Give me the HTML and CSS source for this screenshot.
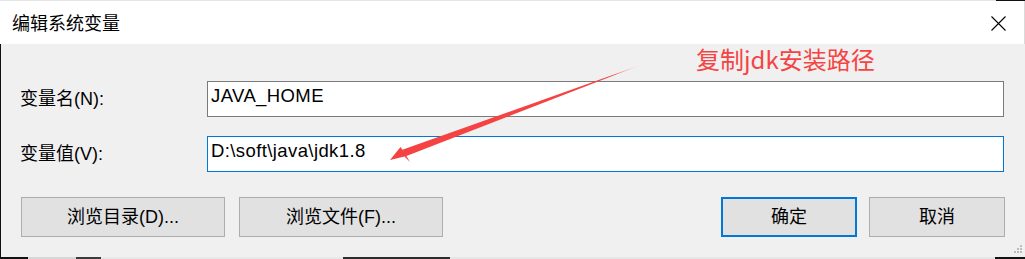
FILE: index.html
```html
<!DOCTYPE html>
<html lang="zh">
<head>
<meta charset="utf-8">
<title>编辑系统变量</title>
<link rel="stylesheet" href="styles.css">
</head>
<body>
<div class="screen">
  <div class="topline"><span class="topline-fill"></span><span class="topline-dark"></span></div>
  <div class="titlebar">
    <span class="title">编辑系统变量</span>
    <svg class="close" width="15" height="15" viewBox="0 0 15 15" aria-hidden="true">
      <path d="M0.5 0.5 L14.5 14.5 M14.5 0.5 L0.5 14.5" stroke="#000" stroke-width="1.1" fill="none"/>
    </svg>
  </div>
  <div class="content">
    <div class="row">
      <label class="label">变量名(N):</label>
      <div class="field">JAVA_HOME</div>
    </div>
    <div class="row row-second">
      <label class="label">变量值(V):</label>
      <div class="field field-focus">D:\soft\java\jdk1.8</div>
    </div>
    <div class="buttons">
      <div class="btn-group">
        <button class="btn btn-wide">浏览目录(D)...</button>
        <button class="btn btn-wide">浏览文件(F)...</button>
      </div>
      <div class="btn-group btn-group-right">
        <button class="btn btn-narrow btn-default">确定</button>
        <button class="btn btn-narrow">取消</button>
      </div>
    </div>
    <svg class="grip" width="10" height="10" viewBox="0 0 10 10" aria-hidden="true">
      <rect x="7" y="0" width="2" height="2" fill="#bdbdbd"/>
      <rect x="4" y="3" width="2" height="2" fill="#bdbdbd"/>
      <rect x="7" y="3" width="2" height="2" fill="#bdbdbd"/>
      <rect x="1" y="6" width="2" height="2" fill="#bdbdbd"/>
      <rect x="4" y="6" width="2" height="2" fill="#bdbdbd"/>
      <rect x="7" y="6" width="2" height="2" fill="#bdbdbd"/>
    </svg>
  </div>
  <div class="bottomline"><span class="bl-dark"></span><span class="bl-gray"></span><span class="bl-mid"></span><span class="bl-text"></span><span class="bl-gray2"></span><span class="bl-text2"></span><span class="bl-rest"></span></div>

  <div class="annotation">复制jdk安装路径</div>
  <svg class="arrow" width="1025" height="259" viewBox="0 0 1025 259" aria-hidden="true">
    <defs>
      <linearGradient id="fade" x1="640" y1="65" x2="400" y2="155" gradientUnits="userSpaceOnUse">
        <stop offset="0" stop-color="#f54242" stop-opacity="0.2"/>
        <stop offset="0.12" stop-color="#f54242" stop-opacity="1"/>
        <stop offset="1" stop-color="#f54242" stop-opacity="1"/>
      </linearGradient>
    </defs>
    <polygon points="640,65.2 405.8,156.2 402.3,149.8" fill="url(#fade)"/>
    <polygon points="390,160 400.5,147 404,152 410,162 404.5,156.5" fill="#f54242"/>
  </svg>
</div>
</body>
</html>
```

FILE: styles.css
```css
html, body {
  margin: 0;
  padding: 0;
}

body {
  width: 1025px;
  height: 259px;
  overflow: hidden;
  background: #f0f0f0;
  font-family: "Liberation Sans", "Noto Sans CJK SC", sans-serif;
  font-size: 18px;
  color: #000;
}

.screen {
  position: relative;
  width: 1025px;
  height: 259px;
  display: flex;
  flex-direction: column;
}

.topline {
  height: 1px;
  display: flex;
}

.topline-fill {
  flex: 1;
  background: #e4e4e4;
}

.topline-dark {
  width: 29px;
  background: #111;
}

.titlebar {
  height: 43px;
  background: #fff;
  display: flex;
  align-items: center;
  justify-content: space-between;
  padding: 0 18px 0 12px;
  border-right: 1px solid #dadada;
}

.title {
  font-family: "Noto Sans CJK SC", sans-serif;
  font-size: 18px;
  line-height: 20px;
  margin-top: -1px;
}

.close {
  display: block;
  margin-top: 1px;
}

.content {
  position: relative;
  flex: 1;
  background: #f0f0f0;
  border-left: 1px solid #111;
  padding: 37px 20px 0 19px;
}

.row {
  display: flex;
  align-items: center;
}

.row-second {
  margin-top: 19px;
}

.label {
  width: 187px;
  font-size: 18px;
  line-height: 22px;
}

.field {
  box-sizing: border-box;
  width: 797px;
  height: 36px;
  border: 1px solid #7a7a7a;
  background: #fff;
  padding: 3px 3px 0 3px;
  line-height: 21px;
  font-family: "Liberation Sans", "Noto Sans CJK SC", sans-serif;
  font-size: 18.5px;
  letter-spacing: 0.4px;
  white-space: nowrap;
}

.field-focus {
  border-color: #0078d7;
}

.buttons {
  display: flex;
  justify-content: space-between;
  margin-top: 25px;
  padding-left: 1px;
}

.btn-group {
  display: flex;
  gap: 14px;
}

.btn-group-right {
  gap: 12px;
}

.btn {
  box-sizing: border-box;
  height: 40px;
  margin: 0;
  border: 1px solid #adadad;
  background: #e1e1e1;
  font-family: "Liberation Sans", "Noto Sans CJK SC", sans-serif;
  font-size: 18px;
  color: #000;
  padding: 0;
  line-height: 22px;
}

.btn-wide {
  width: 204px;
}

.btn-narrow {
  width: 136px;
}

.btn-default {
  border: 2px solid #0078d7;
}

.grip {
  position: absolute;
  right: 2px;
  bottom: 2px;
  display: block;
}

.bottomline {
  height: 2px;
  display: flex;
}

.bl-dark {
  width: 28px;
  background: #111;
}

.bl-gray {
  width: 48px;
  background: #d8d8d8;
}

.bl-mid {
  width: 25px;
  background: #3a3a3a;
}

.bl-text {
  width: 242px;
  background: #e8e8e8;
}

.bl-gray2 {
  width: 107px;
  background: #2c2c2c;
}

.bl-text2 {
  flex: 1;
  background: #e6e6e6;
}

.bl-rest {
  width: 30px;
  background: #111;
}

.annotation {
  position: absolute;
  left: 696px;
  top: 45px;
  font-family: "Noto Sans CJK SC", sans-serif;
  font-size: 24px;
  line-height: 28px;
  color: #f54444;
  white-space: nowrap;
}

.arrow {
  position: absolute;
  left: 0;
  top: 0;
  pointer-events: none;
}
```
